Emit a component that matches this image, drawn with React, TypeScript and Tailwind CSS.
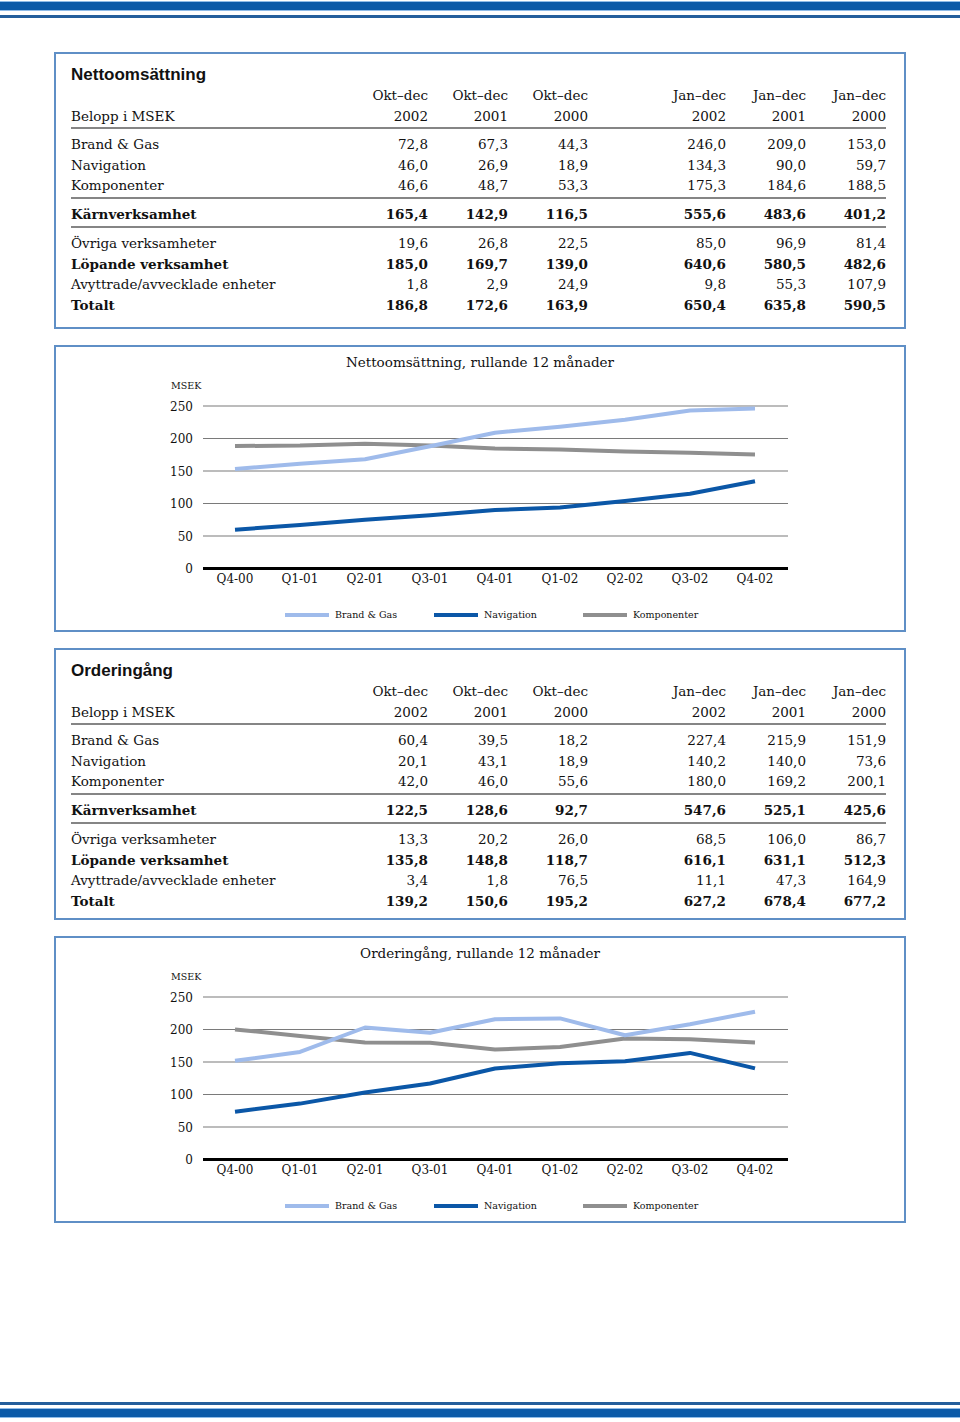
import React from "react"

const serif = "font-['DejaVu_Serif',serif]"

type Row = { label: string; values: string[]; bold?: boolean }

interface TableData {
  title: string
  groups: Row[][]
}

const netSales: TableData = {
  title: "Nettoomsättning",
  groups: [
    [
      { label: "Brand & Gas", values: ["72,8", "67,3", "44,3", "246,0", "209,0", "153,0"] },
      { label: "Navigation", values: ["46,0", "26,9", "18,9", "134,3", "90,0", "59,7"] },
      { label: "Komponenter", values: ["46,6", "48,7", "53,3", "175,3", "184,6", "188,5"] },
    ],
    [{ label: "Kärnverksamhet", values: ["165,4", "142,9", "116,5", "555,6", "483,6", "401,2"], bold: true }],
    [
      { label: "Övriga verksamheter", values: ["19,6", "26,8", "22,5", "85,0", "96,9", "81,4"] },
      { label: "Löpande verksamhet", values: ["185,0", "169,7", "139,0", "640,6", "580,5", "482,6"], bold: true },
      { label: "Avyttrade/avvecklade enheter", values: ["1,8", "2,9", "24,9", "9,8", "55,3", "107,9"] },
      { label: "Totalt", values: ["186,8", "172,6", "163,9", "650,4", "635,8", "590,5"], bold: true },
    ],
  ],
}

const orders: TableData = {
  title: "Orderingång",
  groups: [
    [
      { label: "Brand & Gas", values: ["60,4", "39,5", "18,2", "227,4", "215,9", "151,9"] },
      { label: "Navigation", values: ["20,1", "43,1", "18,9", "140,2", "140,0", "73,6"] },
      { label: "Komponenter", values: ["42,0", "46,0", "55,6", "180,0", "169,2", "200,1"] },
    ],
    [{ label: "Kärnverksamhet", values: ["122,5", "128,6", "92,7", "547,6", "525,1", "425,6"], bold: true }],
    [
      { label: "Övriga verksamheter", values: ["13,3", "20,2", "26,0", "68,5", "106,0", "86,7"] },
      { label: "Löpande verksamhet", values: ["135,8", "148,8", "118,7", "616,1", "631,1", "512,3"], bold: true },
      { label: "Avyttrade/avvecklade enheter", values: ["3,4", "1,8", "76,5", "11,1", "47,3", "164,9"] },
      { label: "Totalt", values: ["139,2", "150,6", "195,2", "627,2", "678,4", "677,2"], bold: true },
    ],
  ],
}

const GRID = "grid grid-cols-[277px_80px_80px_80px_58px_80px_80px_80px]"

function TableRow({ label, values, bold }: Row) {
  return (
    <div className={`${GRID} h-[20.5px] items-center ${bold ? "font-bold" : ""}`}>
      <div>{label}</div>
      {values.map((v, i) => (
        <React.Fragment key={i}>
          {i === 3 && <div />}
          <div className="text-right">{v}</div>
        </React.Fragment>
      ))}
    </div>
  )
}

function Rule({ top = 1 }: { top?: number }) {
  return <div className={`${top === 2 ? "mt-[2px]" : "mt-[1px]"} mb-[5px] h-[2px] bg-[#858585]`} />
}

function SalesTable({ data, short }: { data: TableData; short?: boolean }) {
  return (
    <div className={`border-2 border-[#5f8fc6] pl-[15px] pr-[18px] pt-[11px] ${short ? "pb-[7px]" : "pb-[12px]"} text-[#111]`}>
      <div className="font-['Liberation_Sans',sans-serif] text-[17px] font-bold leading-[20px]">{data.title}</div>
      <div className={`${serif} text-[13.5px]`}>
        <TableRow label="" values={["Okt–dec", "Okt–dec", "Okt–dec", "Jan–dec", "Jan–dec", "Jan–dec"]} />
        <TableRow label="Belopp i MSEK" values={["2002", "2001", "2000", "2002", "2001", "2000"]} />
        <Rule />
        {data.groups.map((group, gi) => (
          <div key={gi}>
            {group.map((r) => (
              <TableRow key={r.label} {...r} />
            ))}
            {gi < data.groups.length - 1 && <Rule top={gi === 1 ? 2 : 1} />}
          </div>
        ))}
      </div>
    </div>
  )
}

interface Series {
  name: string
  color: string
  values: number[]
}

const quarters = ["Q4-00", "Q1-01", "Q2-01", "Q3-01", "Q4-01", "Q1-02", "Q2-02", "Q3-02", "Q4-02"]

const salesSeries: Series[] = [
  { name: "Komponenter", color: "#8f8f8f", values: [188.5, 189, 192, 189, 184.6, 183, 180, 178, 175.3] },
  { name: "Brand & Gas", color: "#9fbbeb", values: [153, 161, 168, 188, 209, 218, 229, 243, 246] },
  { name: "Navigation", color: "#0b57a7", values: [59.7, 67, 75, 82, 90, 94, 104, 115, 134.3] },
]

const orderSeries: Series[] = [
  { name: "Komponenter", color: "#8f8f8f", values: [200.1, 190, 180, 179.5, 169.2, 173, 186, 185, 180] },
  { name: "Brand & Gas", color: "#9fbbeb", values: [151.9, 165.5, 203, 195, 215.9, 217, 191, 208, 227.4] },
  { name: "Navigation", color: "#0b57a7", values: [73.6, 86, 103, 117, 140, 148, 151, 164, 140.2] },
]

const legend = [
  { name: "Brand & Gas", color: "#9fbbeb" },
  { name: "Navigation", color: "#0b57a7" },
  { name: "Komponenter", color: "#8f8f8f" },
]

const Y0 = 187.5
const SCALE = 0.65
const X0 = 179
const STEP = 65

function LineChart({ title, series }: { title: string; series: Series[] }) {
  return (
    <div className={`border-2 border-[#5f8fc6] pt-[5px] pb-[8px] text-[#111] ${serif}`}>
      <div className="text-center text-[13.5px] leading-[20px]">{title}</div>
      <svg width="848" height="210" viewBox="0 0 848 210" className="mt-[9px] block">
        <text x={115} y={8} fontSize="9.5" fill="#111">MSEK</text>
        {[250, 200, 150, 100, 50].map((v) => (
          <g key={v}>
            <line x1={147} x2={732} y1={Y0 - v * SCALE} y2={Y0 - v * SCALE} stroke="#7a7a7a" strokeWidth="1.2" />
            <text x={137} y={Y0 - v * SCALE + 4.5} fontSize="12" textAnchor="end" fill="#111">{v}</text>
          </g>
        ))}
        <line x1={147} x2={732} y1={Y0} y2={Y0} stroke="#000" strokeWidth="3" />
        <text x={137} y={Y0 + 4.5} fontSize="12" textAnchor="end" fill="#111">0</text>
        {quarters.map((q, i) => (
          <text key={q} x={X0 + i * STEP} y={Y0 + 14} fontSize="12" textAnchor="middle" fill="#111">{q}</text>
        ))}
        {series.map((s) => (
          <polyline
            key={s.name}
            points={s.values.map((v, i) => `${X0 + i * STEP},${(Y0 - v * SCALE).toFixed(1)}`).join(" ")}
            fill="none"
            stroke={s.color}
            strokeWidth="4"
            strokeLinejoin="round"
          />
        ))}
      </svg>
      <div className="mt-[17px] flex pl-[229px] text-[9.5px] leading-[14px]">
        {legend.map((l) => (
          <div key={l.name} className="flex w-[149px] items-center gap-[6px]">
            <div className="h-[4px] w-[44px]" style={{ backgroundColor: l.color }} />
            <span>{l.name}</span>
          </div>
        ))}
      </div>
    </div>
  )
}

export default function App() {
  return (
    <div className="flex h-[1422px] flex-col bg-white">
      <div className="mt-[2px] h-[8px] bg-[#0c5aa8] shadow-[0_0_0_1px_#8fbbe8]" />
      <div className="mt-[5px] h-[3px] bg-[#245e9c]" />

      <div className="mt-[34px] flex flex-col gap-[16px] px-[54px]">
        <SalesTable data={netSales} />
        <LineChart title="Nettoomsättning, rullande 12 månader" series={salesSeries} />
        <SalesTable data={orders} short />
        <LineChart title="Orderingång, rullande 12 månader" series={orderSeries} />
      </div>

      <div className="mt-auto h-[3px] bg-[#245e9c]" />
      <div className="mt-[4px] mb-[5px] h-[8px] bg-[#0c5aa8] shadow-[0_0_0_1px_#8fbbe8]" />
    </div>
  )
}
